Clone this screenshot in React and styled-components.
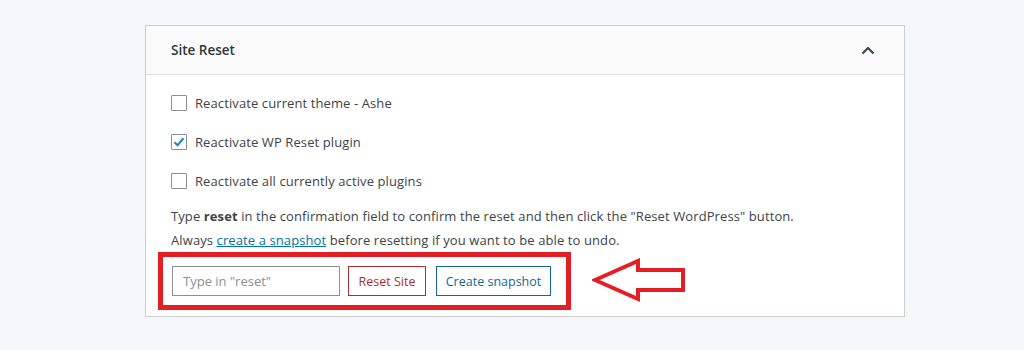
import React from 'react';
import styled, { createGlobalStyle } from 'styled-components';

const GlobalStyle = createGlobalStyle`
  body {
    margin: 0;
    background: #f6f7f9;
    font-family: "Segoe UI", "Open Sans", "Noto Sans", sans-serif;
    color: #3c434a;
  }
`;

const Page = styled.div`
  width: 1024px;
  height: 350px;
  padding: 25px 0 0 145px;
  box-sizing: border-box;
`;

const Card = styled.section`
  width: 760px;
  box-sizing: border-box;
  background: #fff;
  border: 1px solid #ccd0d4;
`;

const Header = styled.div`
  height: 48px;
  display: flex;
  align-items: center;
  justify-content: space-between;
  padding: 0 29px 0 25px;
  background: #fafafa;
  border-bottom: 1px solid #dcdcde;
`;

const Title = styled.h2`
  margin: 0;
  font-size: 13.5px;
  font-weight: 600;
  color: #32373c;
`;

const Body = styled.div`
  padding: 8px 25px 6px 25px;
  font-size: 13px;
  letter-spacing: 0.1px;
`;

const Row = styled.label`
  height: 39px;
  display: flex;
  align-items: center;
  gap: 8px;
`;

const Box = styled.span`
  width: 16px;
  height: 16px;
  box-sizing: border-box;
  border: 1px solid #8c8f94;
  border-radius: 1px;
  background: #fff;
  display: flex;
  align-items: center;
  justify-content: center;
`;

const Text = styled.p`
  margin: 4px 0 0;
  line-height: 24px;
`;

const Link = styled.a`
  color: #0073aa;
  text-decoration: underline;
`;

const ActionLine = styled.div`
  display: flex;
  align-items: center;
  gap: 21px;
  margin-left: -13px;
`;

const Frame = styled.div`
  display: flex;
  padding: 9px 15px 9px 9px;
  border: 5px solid #e31e24;
`;

const Input = styled.input`
  width: 168px;
  height: 30px;
  box-sizing: border-box;
  border: 1px solid #8c8f94;
  padding: 0 10px;
  font: inherit;
  font-size: 13px;
  color: #3c434a;
  &::placeholder {
    color: #8c8f94;
  }
`;

const Button = styled.button`
  width: ${p => p.w}px;
  height: 30px;
  box-sizing: border-box;
  padding: 0;
  margin-left: ${p => p.offset}px;
  background: #fff;
  border: 1px solid ${p => p.tone};
  color: ${p => p.tone};
  font: inherit;
  font-size: 12.5px;
  letter-spacing: 0;
  cursor: pointer;
`;

const Check = () => (
  <svg width="14" height="14" viewBox="0 0 14 14">
    <path d="M2.5 7.2 L5.6 10.2 L11.5 3.2" fill="none" stroke="#1e8cbe" strokeWidth="2.2" />
  </svg>
);

const options = [
  { label: 'Reactivate current theme - Ashe', checked: false },
  { label: 'Reactivate WP Reset plugin', checked: true },
  { label: 'Reactivate all currently active plugins', checked: false }
];

export default function App() {
  return (
    <Page>
      <GlobalStyle />
      <Card>
        <Header>
          <Title>Site Reset</Title>
          <svg width="14" height="9" viewBox="0 0 14 9">
            <path d="M1.5 7.5 L7 2 L12.5 7.5" fill="none" stroke="#3c434a" strokeWidth="2" />
          </svg>
        </Header>
        <Body>
          {options.map(o => (
            <Row key={o.label}>
              <Box>{o.checked && <Check />}</Box>
              {o.label}
            </Row>
          ))}
          <Text>
            Type <b>reset</b> in the confirmation field to confirm the reset and then click the "Reset WordPress" button.
            <br />
            Always <Link href="#">create a snapshot</Link> before resetting if you want to be able to undo.
          </Text>
          <ActionLine>
            <Frame>
              <Input placeholder='Type in "reset"' />
              <Button tone="#b32d2e" w={78} offset={8}>Reset Site</Button>
              <Button tone="#0e6a94" w={115} offset={10}>Create snapshot</Button>
            </Frame>
            <svg width="96" height="46" viewBox="0 0 96 46">
              <path
                d="M3 22 L46 3 L46 12 L91 12 L91 32 L46 32 L46 41 Z"
                fill="none"
                stroke="#e31e24"
                strokeWidth="4"
              />
            </svg>
          </ActionLine>
        </Body>
      </Card>
    </Page>
  );
}
